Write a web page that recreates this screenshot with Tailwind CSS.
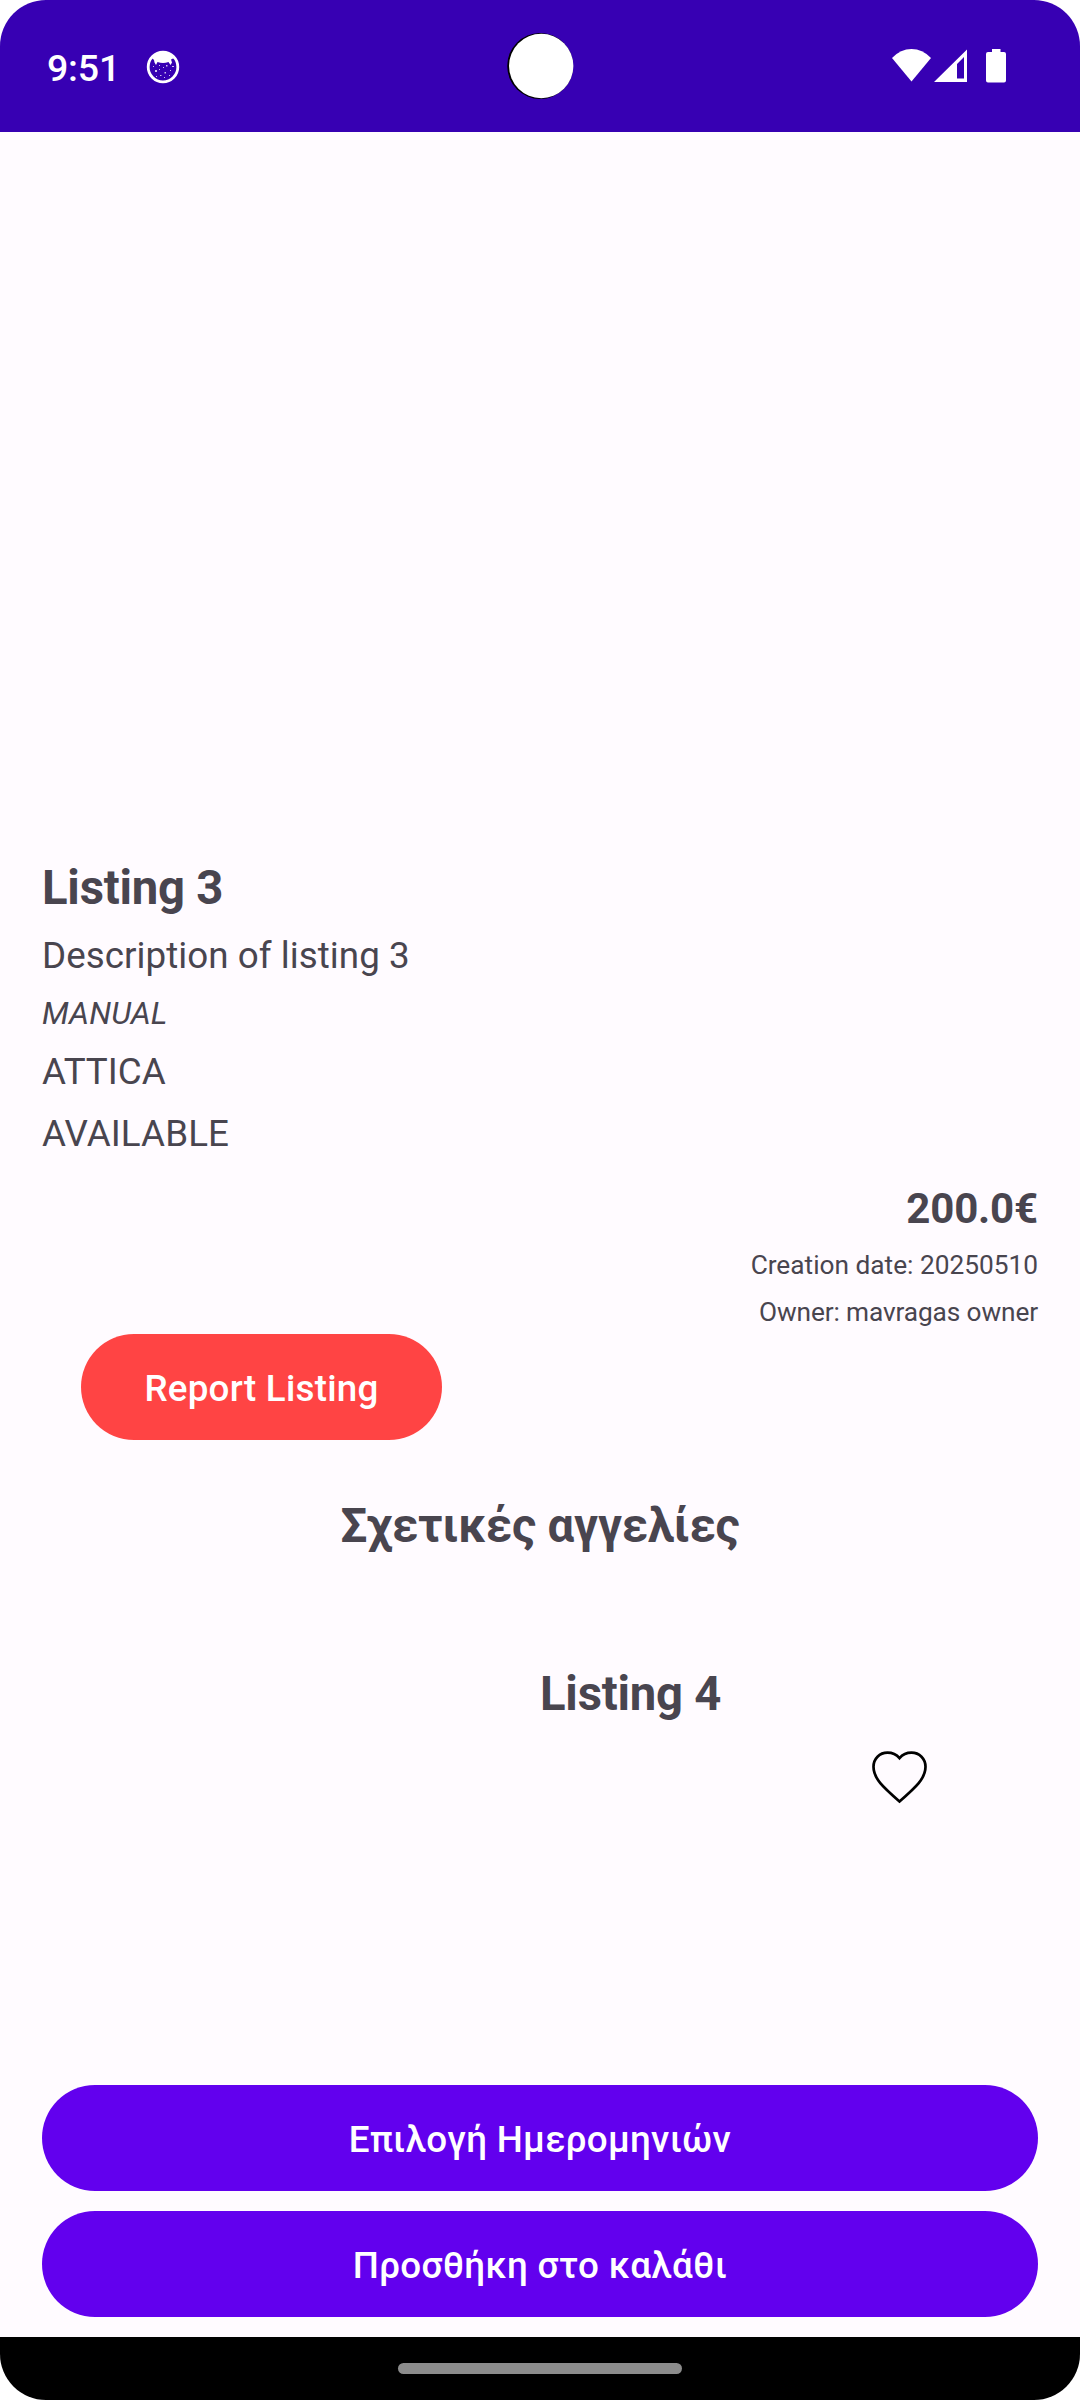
<!DOCTYPE html>
<html lang="el">
<head>
<meta charset="utf-8">
<title>Listing 3</title>
<script src="https://cdn.jsdelivr.net/npm/@tailwindcss/browser@4"></script>
</head>
<body class="bg-white">
<div class="flex flex-col w-[1080px] h-[2400px] rounded-[46px] overflow-hidden bg-[#fffbff] text-[#49454f] font-['Roboto',sans-serif]">
  <header class="relative shrink-0 h-[132px] bg-[#3700b3] text-white flex items-start">
    <span class="ml-[47px] mt-[47px] w-[72px] text-[37.5px] leading-[43px] font-medium whitespace-nowrap tracking-[-0.2px]">9:51</span>
    <svg class="ml-[27px] mt-[50px]" width="34" height="34" viewBox="0 0 34 34">
      <circle cx="17" cy="17" r="14.800" fill="none" stroke="#fff" stroke-width="2.800"/>
      <path fill="#fff" d="M6 8Q10 2 17 2T28 8L25 9.500L26 12.500L24.500 15L22.500 12Q17 14 11.500 12L10 15L8.500 12.500L8 10Z"/>
      <path fill="#fff" fill-opacity=".75" d="M9 20h2v2H9zM18.500 22h1.500v1.500h-1.500zM20 15h1.500v1.500h-1.500zM13 19h1v1h-1zM17 17h1v1h-1zM24 20h1v1h-1zM26 16h2v1h-2zM14 25h1.500v1H14zM18 27h1v1h-1zM23 25h1v1h-1zM7 16h1v1H7zM10 26h1v1h-1zM13 15h1v1h-1z"/>
    </svg>
    <svg class="absolute left-[506px] top-[32px]" width="69" height="68" viewBox="0 0 69 68">
      <circle cx="34.200" cy="34" r="33" fill="#000"/>
      <circle cx="35.200" cy="34" r="32.200" fill="#fff"/>
    </svg>
    <svg class="ml-auto mr-[74px] mt-[49px]" width="114" height="34" viewBox="0 0 114 34" fill="#fff">
      <path d="M0 9Q8.500 0 19.500 0T39 9L19.500 32.500Z"/>
      <path fill-rule="evenodd" d="M42 33L75 .500V33ZM65 15V29.500H72V8Z"/>
      <path d="M100 0h8.500v3h3.500a2 2 0 0 1 2 2v26.500a2 2 0 0 1-2 2H96a2 2 0 0 1-2-2V5a2 2 0 0 1 2-2h4z"/>
    </svg>
  </header>
  <main class="flex flex-col grow px-[42px] pt-[728px]">
    <h1 class="text-[47.25px] leading-[56px] font-bold tracking-[-0.22px]">Listing 3</h1>
    <p class="mt-[18px] text-[36.75px] leading-[43px] tracking-[0.05px]">Description of listing 3</p>
    <p class="mt-[18px] text-[31.5px] leading-[37px] italic tracking-[0.15px]">MANUAL</p>
    <p class="mt-[18px] text-[36.75px] leading-[43px]">ATTICA</p>
    <p class="mt-[19px] text-[36.75px] leading-[43px] tracking-[0.1px]">AVAILABLE</p>
    <p class="mt-[29px] text-[42px] leading-[49px] font-bold text-right tracking-[-0.15px]">200.0€</p>
    <p class="mt-[17px] text-[26.25px] leading-[30px] text-right">Creation date: 20250510</p>
    <p class="mt-[17px] text-[26.25px] leading-[30px] text-right tracking-[-0.12px]">Owner: mavragas owner</p>
    <button class="ml-[39px] mt-[7px] w-[361px] h-[106px] pt-[2px] rounded-full bg-[#ff4444] text-white text-[36.75px] leading-[43px] font-medium tracking-[0.26px]">Report Listing</button>
    <h2 class="mt-[58px] text-[47.25px] leading-[56px] font-bold text-center tracking-[-0.2px]">Σχετικές αγγελίες</h2>
    <section class="mt-[112px] ml-[498px] flex flex-col">
      <h3 class="text-[47.25px] leading-[56px] font-bold tracking-[-0.22px]">Listing 4</h3>
      <svg class="mt-[28px] ml-[331px]" width="57" height="54" viewBox="0 0 57 54" fill="none" stroke="#000" stroke-width="2.700">
        <path d="M28.500 51.500C12 37 2.500 28.500 2.500 16.800C2.500 8.800 8.500 2.700 16.500 2.700C21.300 2.700 25.600 4.800 28.500 8.200C31.400 4.800 35.700 2.700 40.500 2.700C48.500 2.700 54.500 8.800 54.500 16.800C54.500 28.500 45 37 28.500 51.500Z"/>
      </svg>
    </section>
    <div class="mt-auto mb-[20px] flex flex-col gap-[20px]">
      <button class="h-[106px] pt-[2px] rounded-full bg-[#6200ee] text-white text-[36.75px] leading-[43px] font-medium tracking-[0.3px]">Επιλογή Ημερομηνιών</button>
      <button class="h-[106px] pt-[2px] rounded-full bg-[#6200ee] text-white text-[36.75px] leading-[43px] font-medium tracking-[0.32px]">Προσθήκη στο καλάθι</button>
    </div>
  </main>
  <footer class="shrink-0 h-[63px] bg-black flex items-center justify-center">
    <div class="w-[284px] h-[11px] rounded-full bg-[#8c8c8c]"></div>
  </footer>
</div>
</body>
</html>
